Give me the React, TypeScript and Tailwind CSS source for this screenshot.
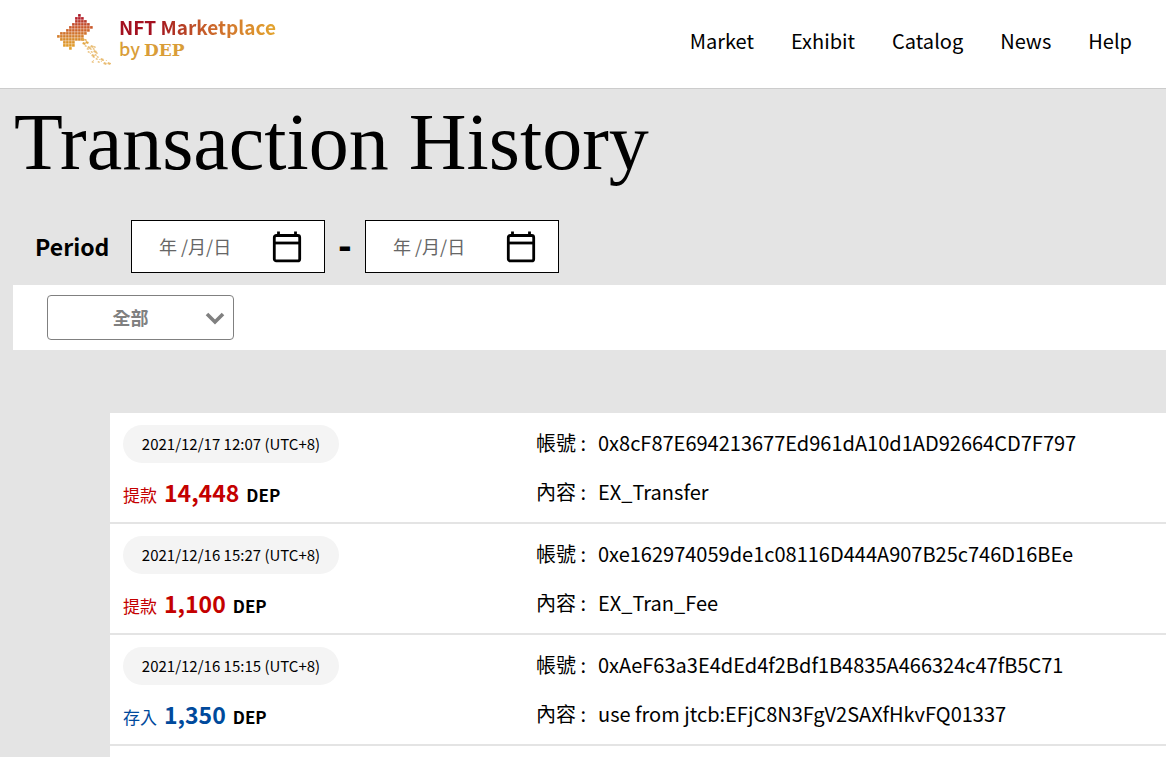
import { useState } from "react";

const navItems = ["Market", "Exhibit", "Catalog", "News", "Help"];

const transactions = [
  { date: "2021/12/17 12:07 (UTC+8)", type: "out", amount: "14,448", account: "0x8cF87E694213677Ed961dA10d1AD92664CD7F797", content: "EX_Transfer" },
  { date: "2021/12/16 15:27 (UTC+8)", type: "out", amount: "1,100", account: "0xe162974059de1c08116D444A907B25c746D16BEe", content: "EX_Tran_Fee" },
  { date: "2021/12/16 15:15 (UTC+8)", type: "in", amount: "1,350", account: "0xAeF63a3E4dEd4f2Bdf1B4835A466324c47fB5C71", content: "use from jtcb:EFjC8N3FgV2SAXfHkvFQ01337" },
];

// [first column, last column] of each row of the mosaic
const mosaicRows = [[7, 7], [6, 8], [6, 9], [5, 10], [4, 11], [3, 10], [1, 9], [0, 8], [1, 8], [2, 5], [2, 5], [4, 4]];
const mosaicColors = ["#a81824", "#b5202a", "#b93a2a", "#c24a2a", "#c9582a", "#cc652b", "#d0722c", "#d47e2c", "#d8892b", "#dc932a", "#e09a28", "#e3a028"];

// x, y, size
const dust = [
  [25, 24, 3], [28, 25, 2], [26, 28, 3], [29, 27, 3], [28, 31, 2], [31, 32, 3], [34, 31, 3], [37, 32, 2], [33, 34, 2],
  [36, 34, 2], [30, 34, 2], [31, 37, 2], [34, 37, 2], [37, 36, 3], [39, 38, 2], [35, 40, 3], [38, 40, 2], [33, 39, 1],
  [40, 42, 2], [36, 42, 2], [39, 44, 2], [42, 45, 1], [36, 46, 1], [41, 47, 2], [44, 44, 3], [46, 46, 1], [47, 48, 3],
  [35, 47, 2], [51, 48, 3], [49, 46, 1], [53, 49, 1], [44, 47, 1],
];

function LogoMark() {
  return (
    <svg viewBox="0 0 56 52" className="h-13 w-14" aria-hidden="true">
      {mosaicRows.map(([from, to], row) =>
        Array.from({ length: to - from + 1 }, (_, i) => (
          <rect key={`${row}-${i}`} x={(from + i) * 3 + 0.1} y={row * 3 + 0.1} width="2.6" height="2.6" fill={mosaicColors[row]} />
        ))
      )}
      {dust.map(([x, y, size], i) => (
        <rect key={i} x={x} y={y} width={size} height={size * 0.7} fill="#e2a746" opacity={i < 4 ? 1 : 0.75} transform={`rotate(20 ${x} ${y})`} />
      ))}
    </svg>
  );
}

function DateField({ label }: { label: string }) {
  const [value, setValue] = useState("");

  return (
    <div className="flex h-[53px] w-[194px] items-center border border-black bg-white pr-[22px] pl-[27px]">
      <input
        type="text"
        aria-label={label}
        placeholder="年 /月/日"
        value={value}
        onChange={(e) => setValue(e.target.value)}
        className="w-full min-w-0 bg-transparent text-[18px] text-[#666] outline-none placeholder:text-[#666]"
      />
      <button type="button" aria-label={`${label} calendar`} className="shrink-0 cursor-pointer">
        <svg viewBox="0 0 30 32" className="h-8 w-[30px]" fill="none" stroke="black">
          <rect x="2.3" y="4.5" width="25.4" height="25.4" rx="2" strokeWidth="2.8" />
          <path d="M2 12h26" strokeWidth="2.8" />
          <path d="M6.5 0.5v4M23.5 0.5v4" strokeWidth="2.8" />
        </svg>
      </button>
    </div>
  );
}

export default function App() {
  const [filter, setFilter] = useState("all");

  return (
    <div className="min-h-screen overflow-x-hidden bg-[#e4e4e4] font-['Noto_Sans_CJK_TC',sans-serif] text-black">
      <header className="flex h-[89px] items-start justify-between border-b border-[#ccc] bg-white pr-[34px] pl-[57px]">
        <a href="#" className="flex gap-[6px] pt-[14px]">
          <LogoMark />
          <span className="flex flex-col pt-[2px] font-bold">
            <span className="bg-gradient-to-r from-[#a3101f] from-25% via-[#cc682b] via-60% to-[#e3a52f] bg-clip-text text-[19px] leading-[22px] text-transparent">
              NFT Marketplace
            </span>
            <span className="text-[18px] leading-[20px] font-medium text-[#d99d38]">
              by <span className="font-['DejaVu_Serif',serif] text-[17px] font-bold">DEP</span>
            </span>
          </span>
        </a>
        <nav className="flex gap-[37px] pt-[26px] text-[20px] leading-[30px]">
          {navItems.map((item) => (
            <a key={item} href="#" className="hover:underline">{item}</a>
          ))}
        </nav>
      </header>

      <main>
        <h1 className="px-[14px] pt-[9px] font-['Liberation_Serif',serif] text-[80px] leading-[88px]">Transaction History</h1>

        <div className="mt-[34px] flex items-center pl-[35px]">
          <span className="w-24 text-[23px] font-bold">Period</span>
          <DateField label="Start date" />
          <span className="w-10 pb-2 text-center text-[36px] leading-[40px] font-black">-</span>
          <DateField label="End date" />
        </div>

        <div className="mt-3 ml-[13px] bg-white py-[10px] pl-[34px]">
          <div className="relative w-[187px]">
            <select
              aria-label="Transaction type"
              value={filter}
              onChange={(e) => setFilter(e.target.value)}
              className="h-[45px] w-full appearance-none rounded border border-[#808080] bg-white pr-5 text-center text-[18px] font-bold text-[#808080]"
            >
              <option value="all">全部</option>
              <option value="out">提款</option>
              <option value="in">存入</option>
            </select>
            <svg viewBox="0 0 20 14" className="pointer-events-none absolute top-[17px] right-[9px] h-[14px] w-5" fill="none" stroke="#808080" strokeWidth="3.6">
              <path d="M2 2l8 8 8-8" />
            </svg>
          </div>
        </div>

        <ul className="mt-[63px] ml-[110px] flex flex-col gap-[2px]">
          {transactions.filter((t) => filter === "all" || t.type === filter).map((t) => (
            <li key={t.date} className="flex h-[109px] bg-white pt-3 pl-[13px]">
              <div className="w-[413px]">
                <div className="flex h-[38px] w-[216px] items-center justify-center rounded-full bg-[#f4f4f4] text-[15px]">{t.date}</div>
                <div className="mt-[12px] flex items-baseline gap-[7px] leading-[34px]">
                  <span className={t.type === "out" ? "text-[17px] text-[#c40000]" : "text-[17px] text-[#004a9c]"}>
                    {t.type === "out" ? "提款" : "存入"}
                  </span>
                  <span className={t.type === "out" ? "text-[23px] font-bold text-[#c40000]" : "text-[23px] font-bold text-[#004a9c]"}>{t.amount}</span>
                  <span className="text-[17px] font-bold">DEP</span>
                </div>
              </div>
              <dl className="grid grid-cols-[62px_1fr] content-start gap-y-[19px] pt-[3px] text-[20px] leading-[30px] whitespace-nowrap">
                <dt>帳號 :</dt>
                <dd>{t.account}</dd>
                <dt>內容 :</dt>
                <dd>{t.content}</dd>
              </dl>
            </li>
          ))}
          <li className="h-[109px] bg-white"></li>
        </ul>
      </main>
    </div>
  );
}
